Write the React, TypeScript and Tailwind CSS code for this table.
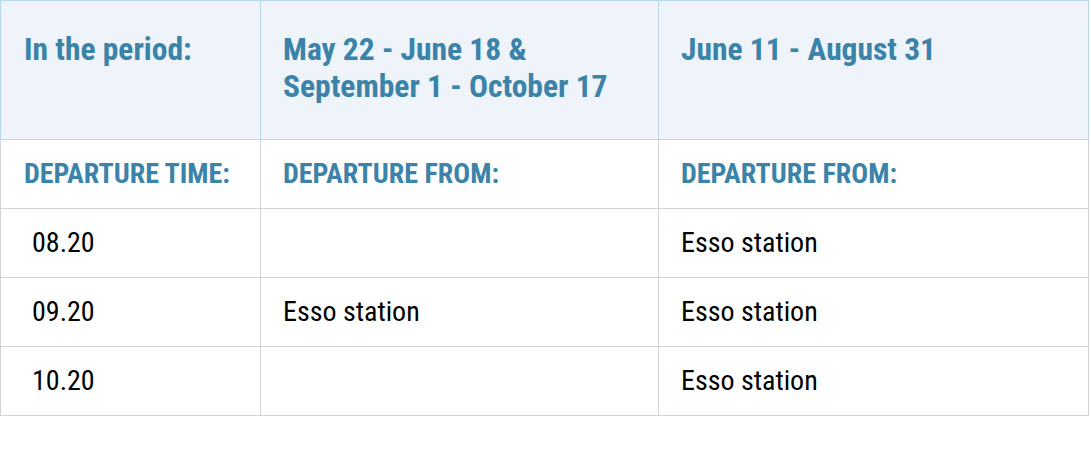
const rows = [
  { time: "08.20", a: "", b: "Esso station" },
  { time: "09.20", a: "Esso station", b: "Esso station" },
  { time: "10.20", a: "", b: "Esso station" },
];

export default function App() {
  return (
    <div className="w-[1091px] h-[457px] bg-white font-['Roboto',sans-serif] font-stretch-condensed">
      <table className="border-collapse w-[1088px] table-fixed">
        <colgroup>
          <col className="w-[260px]" />
          <col className="w-[398px]" />
          <col className="w-[430px]" />
        </colgroup>
        <thead>
          <tr className="h-[139px] bg-[#eef4f9] align-top text-[31.5px] leading-[37px] font-bold text-[#3b83a9]">
            <th className="border border-[#bcd7e6] text-left font-bold pl-[23px] pt-[30px]">In the period:</th>
            <th className="border border-[#bcd7e6] text-left font-bold pl-[22px] pt-[30px]">
              May 22 - June 18 &amp;
              <br />
              September 1 - October 17
            </th>
            <th className="border border-[#bcd7e6] text-left font-bold pl-[22px] pt-[30px]">June 11 - August 31</th>
          </tr>
        </thead>
        <tbody>
          <tr className="h-[69px] text-[28px] font-bold text-[#3b83a9]">
            <td className="border border-[#d3d3d3] border-t-[#bcd7e6] pl-[23px]">DEPARTURE TIME:</td>
            <td className="border border-[#d3d3d3] border-t-[#bcd7e6] pl-[22px]">DEPARTURE FROM:</td>
            <td className="border border-[#d3d3d3] border-t-[#bcd7e6] pl-[22px]">DEPARTURE FROM:</td>
          </tr>
          {rows.map((r) => (
            <tr key={r.time} className="h-[69px] text-[28px] text-black">
              <td className="border border-[#d3d3d3] pl-[31px]">{r.time}</td>
              <td className="border border-[#d3d3d3] pl-[22px]">{r.a}</td>
              <td className="border border-[#d3d3d3] pl-[22px]">{r.b}</td>
            </tr>
          ))}
        </tbody>
      </table>
    </div>
  );
}
